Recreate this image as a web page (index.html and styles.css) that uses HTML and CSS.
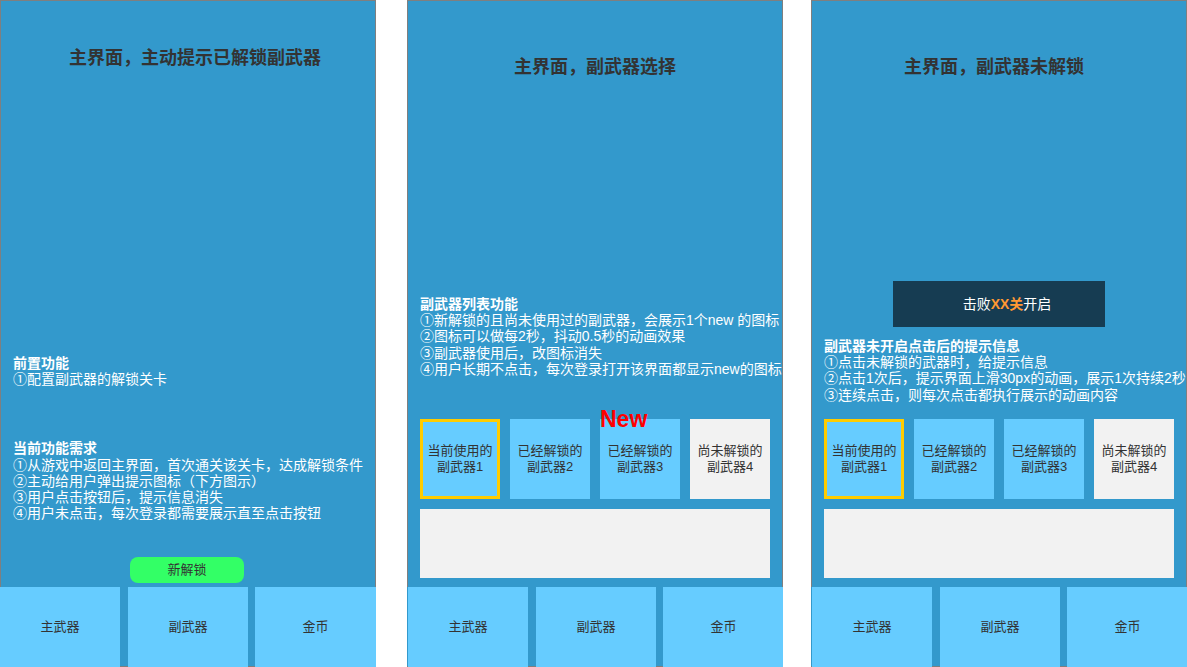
FILE: index.html
```html
<!DOCTYPE html>
<html lang="zh">
<head>
<meta charset="utf-8">
<title>副武器</title>
<link rel="stylesheet" href="styles.css">
</head>
<body>
<div class="board">
  <section class="panel p1">
    <div class="screen">
      <h1 class="title t1">主界面，主动提示已解锁副武器</h1>
      <div class="note n1a">
        <div class="hd">前置功能</div>
        <div>①配置副武器的解锁关卡</div>
      </div>
      <div class="note n1b">
        <div class="hd">当前功能需求</div>
        <div>①从游戏中返回主界面，首次通关该关卡，达成解锁条件</div>
        <div>②主动给用户弹出提示图标（下方图示）</div>
        <div>③用户点击按钮后，提示信息消失</div>
        <div>④用户未点击，每次登录都需要展示直至点击按钮</div>
      </div>
      <div class="newbtn">新解锁</div>
    </div>
    <div class="tabbar">
      <div class="tab">主武器</div>
      <div class="tab">副武器</div>
      <div class="tab">金币</div>
    </div>
  </section>

  <section class="panel p2">
    <div class="screen">
      <h1 class="title">主界面，副武器选择</h1>
      <div class="note n2">
        <div class="hd">副武器列表功能</div>
        <div>①新解锁的且尚未使用过的副武器，会展示1个new 的图标</div>
        <div>②图标可以做每2秒，抖动0.5秒的动画效果</div>
        <div>③副武器使用后，改图标消失</div>
        <div>④用户长期不点击，每次登录打开该界面都显示new的图标</div>
      </div>
      <div class="tiles">
        <div class="tile current">当前使用的<br>副武器1</div>
        <div class="tile">已经解锁的<br>副武器2</div>
        <div class="tile has-badge">已经解锁的<br>副武器3<span class="badge">New</span></div>
        <div class="tile locked">尚未解锁的<br>副武器4</div>
      </div>
      <div class="detail"></div>
    </div>
    <div class="tabbar">
      <div class="tab">主武器</div>
      <div class="tab">副武器</div>
      <div class="tab">金币</div>
    </div>
  </section>

  <section class="panel p3">
    <div class="screen">
      <h1 class="title t3">主界面，副武器未解锁</h1>
      <div class="toast">击败<b>XX关</b>开启</div>
      <div class="note n3">
        <div class="hd">副武器未开启点击后的提示信息</div>
        <div>①点击未解锁的武器时，给提示信息</div>
        <div>②点击1次后，提示界面上滑30px的动画，展示1次持续2秒</div>
        <div>③连续点击，则每次点击都执行展示的动画内容</div>
      </div>
      <div class="tiles">
        <div class="tile current">当前使用的<br>副武器1</div>
        <div class="tile">已经解锁的<br>副武器2</div>
        <div class="tile">已经解锁的<br>副武器3</div>
        <div class="tile locked">尚未解锁的<br>副武器4</div>
      </div>
      <div class="detail"></div>
    </div>
    <div class="tabbar">
      <div class="tab">主武器</div>
      <div class="tab">副武器</div>
      <div class="tab">金币</div>
    </div>
  </section>
</div>
</body>
</html>
```

FILE: styles.css
```css
html, body {
  margin: 0;
  padding: 0;
  background: #ffffff;
}
body {
  font-family: "Liberation Sans", "Noto Sans CJK SC", sans-serif;
  color: #333333;
  overflow: hidden;
}
.board {
  display: flex;
  align-items: flex-start;
  width: 1187px;
  height: 667px;
}
.panel {
  flex: none;
  width: 376px;
  height: 667px;
  display: flex;
  flex-direction: column;
  background: #3399cc;
  overflow: hidden;
}
.p2 { margin-left: 31px; }
.p3 { margin-left: 28px; }

.screen {
  flex: none;
  height: 587px;
  box-sizing: border-box;
  border: 1px solid #7f7f7f;
  border-bottom: none;
  display: flex;
  flex-direction: column;
  position: relative;
  white-space: nowrap;
  overflow: hidden;
}
.title {
  margin: 54px 0 0;
  font-size: 18px;
  line-height: 24px;
  font-weight: bold;
  text-align: center;
  color: #333333;
}
.title.t1 { margin-top: 45px; padding-left: 14px; }
.title.t3 { padding-right: 10px; }

.note {
  color: #ffffff;
  font-size: 14px;
  line-height: 16.2px;
  padding-left: 12px;
}
.note .hd { font-weight: bold; }
.n1a { margin-top: 285px; }
.n1b { margin-top: 53px; }
.n2 { margin-top: 217px; }
.n3 { margin-top: 11px; }

.newbtn {
  margin: 36px 0 0 129px;
  width: 114px;
  height: 26px;
  border-radius: 8px;
  background: #33ff66;
  color: #333333;
  font-size: 13px;
  line-height: 26px;
  text-align: center;
}

.tiles {
  margin: 42px 0 0 12px;
  display: flex;
  gap: 10px;
}
.n3 + .tiles { margin-top: 16px; }
.tile {
  position: relative;
  width: 80px;
  height: 80px;
  box-sizing: border-box;
  background: #66ccff;
  color: #333333;
  font-size: 13px;
  line-height: 16px;
  display: flex;
  align-items: center;
  justify-content: center;
  text-align: center;
}
.tile.current { border: 3px solid #ffcc00; }
.tile.locked { background: #f2f2f2; }
.badge {
  position: absolute;
  left: 0;
  top: -12px;
  color: #ff0000;
  font-family: "Liberation Sans", Arial, sans-serif;
  font-weight: bold;
  font-size: 23px;
  line-height: 24px;
}
.detail {
  margin: 10px 0 0 12px;
  width: 350px;
  height: 69px;
  background: #f2f2f2;
}

.toast {
  margin: 202px 0 0 81px;
  width: 212px;
  height: 46px;
  box-sizing: border-box;
  padding-left: 16px;
  background: #163c52;
  color: #ffffff;
  font-size: 14px;
  line-height: 46px;
  text-align: center;
}
.toast b { color: #ff9933; font-weight: bold; }

.tabbar {
  flex: none;
  height: 80px;
  box-sizing: border-box;
  border-bottom: 1px solid #7f7f7f;
  display: grid;
  grid-template-columns: 120px 120px 120px;
  column-gap: 8px;
  align-items: start;
}
.p2 .tabbar, .p3 .tabbar { padding-left: 1px; }
.tab {
  height: 80px;
  background: #66ccff;
  color: #333333;
  font-size: 13px;
  line-height: 80px;
  text-align: center;
}
.tab:nth-child(3) { margin-left: -1px; }
```
